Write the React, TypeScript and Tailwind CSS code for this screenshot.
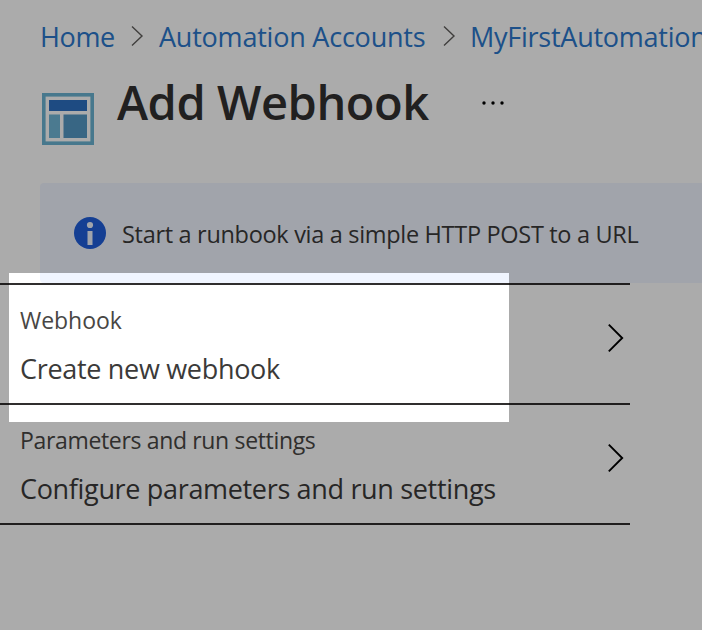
const font = "font-['Open_Sans','Noto_Sans',sans-serif]";

function Crumb({ children, className }: { children: string; className: string }) {
  return <a className={`shrink-0 whitespace-nowrap text-[27px] leading-[36px] text-[#2c78cc] ${className}`}>{children}</a>;
}

function CrumbChevron() {
  return (
    <svg className="mt-[6px] h-[22px] w-[13px] shrink-0" viewBox="0 0 13 22" fill="none" stroke="#605e5c" strokeWidth="1.4">
      <path d="M1 1.5 L11 11 L1 20.5" />
    </svg>
  );
}

function Row({ label, value, labelClass, valueClass }: { label: string; value: string; labelClass: string; valueClass: string }) {
  return (
    <div className="flex h-[120px] justify-between border-b-2 border-[#302e2e] pl-[20px] pr-[5px]">
      <div className="flex flex-col pt-[19px]">
        <span className={`whitespace-nowrap text-[23px] leading-[32px] text-[#484644] ${labelClass}`}>{label}</span>
        <span className={`mt-[15px] whitespace-nowrap text-[27px] leading-[36px] text-[#3b3a39] ${valueClass}`}>{value}</span>
      </div>
      <svg className="mt-[38px] h-[30px] w-[18px]" viewBox="0 0 18 30" fill="none" stroke="#000" strokeWidth="1.9">
        <path d="M1.8 1.6 L15.2 15 L1.8 28.4" />
      </svg>
    </div>
  );
}

export default function App() {
  return (
    <div className={`relative h-[630px] w-[702px] overflow-hidden bg-white ${font}`}>
      <nav className="flex h-[56px] items-start overflow-hidden pl-[40px] pt-[19px]">
        <Crumb className="w-[91px] tracking-[-0.35px]">Home</Crumb>
        <CrumbChevron />
        <Crumb className="ml-[15px] w-[284px] tracking-[-0.22px]">Automation Accounts</Crumb>
        <CrumbChevron />
        <Crumb className="ml-[14px] tracking-[-0.25px]">MyFirstAutomation</Crumb>
      </nav>
      <header className="flex h-[127px] items-start pl-[42px]">
        <svg className="mt-[37px] h-[52px] w-[52px] shrink-0" viewBox="0 0 52 52">
          <rect x="1.8" y="1.8" width="48.4" height="48.4" fill="none" stroke="#6bb4d2" strokeWidth="3.6" />
          <rect x="7" y="7" width="38" height="11" fill="#2d71c2" />
          <rect x="7" y="21.5" width="11" height="23.5" fill="#71b6d7" />
          <rect x="21.5" y="21.5" width="23.5" height="23.5" fill="#5498c5" />
        </svg>
        <h1 className="ml-[23px] mt-[14px] w-[364px] whitespace-nowrap text-[47px] font-semibold leading-[64px] tracking-[-0.45px] text-[#323130]">Add Webhook</h1>
        <svg className="mt-[44px] h-[6px] w-[24px]" viewBox="0 0 24 6">
          <circle cx="3" cy="3" r="1.7" />
          <circle cx="12" cy="3" r="1.7" />
          <circle cx="21" cy="3" r="1.7" />
        </svg>
      </header>
      <div className="ml-[40px] flex h-[100px] items-start rounded-l-[4px] bg-[#f0f5ff] pl-[34px]">
        <svg className="mt-[34px] h-[32px] w-[32px] shrink-0" viewBox="0 0 32 32">
          <circle cx="16" cy="16" r="16" fill="#205fdc" />
          <circle cx="16" cy="8" r="3.1" fill="#f0f5ff" />
          <rect x="13.5" y="14" width="5" height="14" fill="#f0f5ff" />
        </svg>
        <p className="ml-[16px] mt-[35px] whitespace-nowrap text-[23.5px] leading-[32px] tracking-[-0.31px] text-[#3b3a39]">Start a runbook via a simple HTTP POST to a URL</p>
      </div>
      <main className="w-[630px] border-t-2 border-[#302e2e]">
        <Row label="Webhook" value="Create new webhook" labelClass="tracking-[-0.05px]" valueClass="tracking-[-0.31px]" />
        <Row label="Parameters and run settings" value="Configure parameters and run settings" labelClass="tracking-[-0.34px]" valueClass="tracking-[-0.33px]" />
      </main>
      <div className="absolute left-[9px] top-[273px] h-[149px] w-[500px] shadow-[0_0_0_800px_rgba(0,0,0,0.33)]" />
    </div>
  );
}
